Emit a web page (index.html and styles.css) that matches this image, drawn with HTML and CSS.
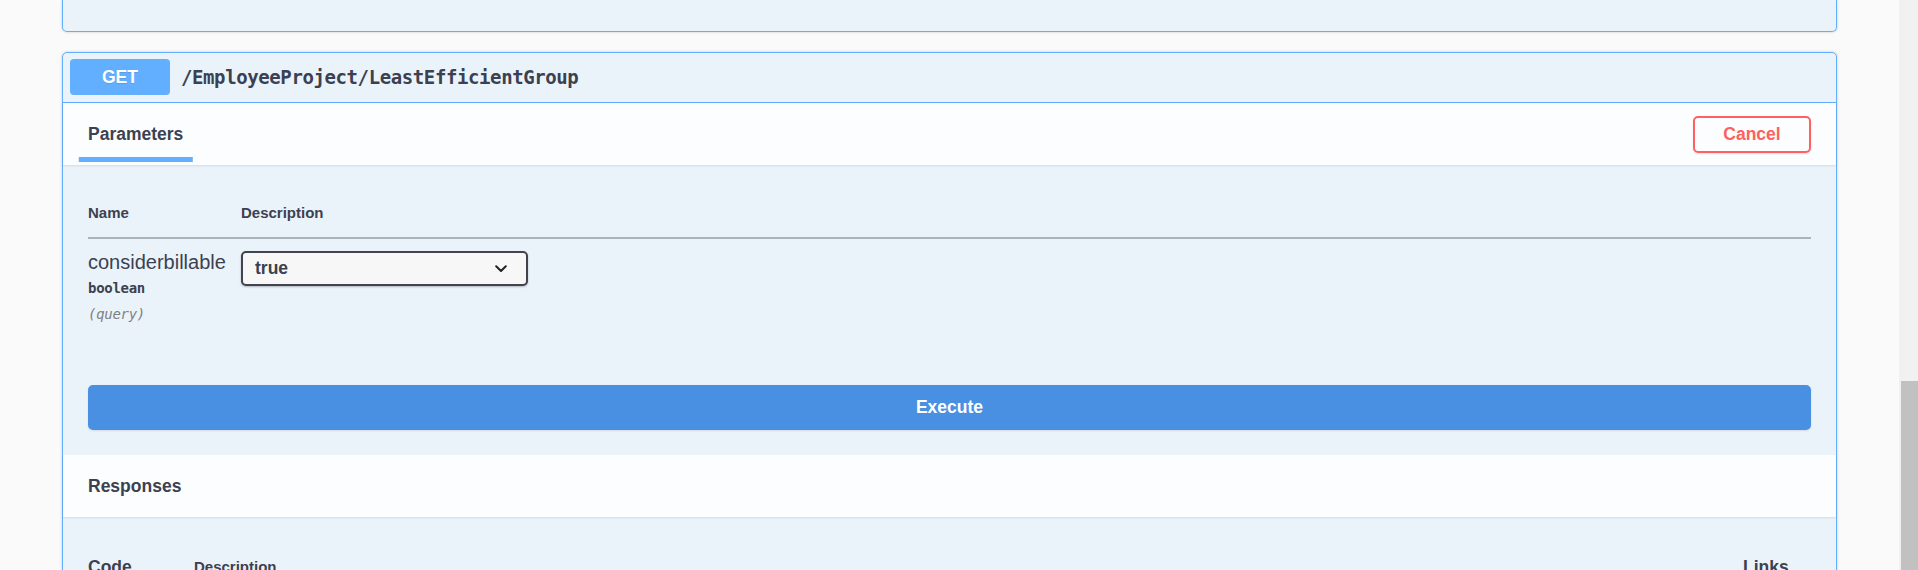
FILE: index.html
```html
<!DOCTYPE html>
<html lang="en">
<head>
<meta charset="utf-8">
<title>Swagger UI</title>
<link rel="stylesheet" href="styles.css">
</head>
<body>
<div class="screen">
  <div class="page">
    <div class="opblock opblock-prev"></div>
    <div class="opblock">
      <div class="summary">
        <span class="method">GET</span>
        <span class="path">/EmployeeProject/LeastEfficientGroup</span>
      </div>
      <div class="section-header">
        <div class="tab"><h4 class="tab-title">Parameters</h4></div>
        <button class="btn-cancel">Cancel</button>
      </div>
      <div class="table-container">
        <table class="params">
          <thead>
            <tr>
              <th class="col-name">Name</th>
              <th class="col-desc">Description</th>
            </tr>
          </thead>
          <tbody>
            <tr>
              <td class="col-name">
                <div class="param-name">considerbillable</div>
                <div class="param-type">boolean</div>
                <div class="param-in">(query)</div>
              </td>
              <td class="col-desc">
                <div class="select">
                  <span class="select-value">true</span>
                  <svg class="chevron" width="12" height="8" viewBox="0 0 12 8"><path d="M1.2 1.3 L6 6 L10.8 1.3" fill="none" stroke="#222" stroke-width="2" stroke-linecap="round" stroke-linejoin="round"/></svg>
                </div>
              </td>
            </tr>
          </tbody>
        </table>
      </div>
      <div class="execute-wrapper">
        <button class="btn-execute">Execute</button>
      </div>
      <div class="section-header">
        <h4 class="section-title">Responses</h4>
      </div>
      <div class="responses-inner">
        <table class="responses">
          <thead>
            <tr>
              <th class="r-code">Code</th>
              <th class="r-desc">Description</th>
              <th class="r-links">Links</th>
            </tr>
          </thead>
        </table>
      </div>
    </div>
  </div>
  <div class="scrollbar"><div class="thumb"></div></div>
</div>
</body>
</html>
```
FILE: styles.css
```css
html, body {
  margin: 0;
  padding: 0;
  height: 570px;
  overflow: hidden;
}
body {
  font-family: "Liberation Sans", Arial, sans-serif;
  color: #3b4151;
}
.screen {
  display: flex;
  height: 570px;
}
.page {
  flex: 1;
  background: #fafafa;
  padding: 0 62px 0 62px;
  overflow: hidden;
}
.scrollbar {
  width: 19px;
  background: #f1f1f1;
  display: flex;
  flex-direction: column;
  align-items: flex-end;
}
.thumb {
  width: 17px;
  margin-top: 381px;
  flex: 1;
  background: #c1c1c1;
}
.opblock {
  background: #ebf3fa;
  border: 1px solid #61affe;
  border-radius: 5px;
  box-shadow: 0 0 3px rgba(0, 0, 0, 0.19);
}
.opblock-prev {
  height: 31px;
  border-top: none;
  border-radius: 0 0 5px 5px;
  margin-bottom: 20px;
}
.summary {
  display: flex;
  align-items: center;
  padding: 6px 6px 7px 7px;
  border-bottom: 1px solid #61affe;
}
.method {
  width: 100px;
  height: 36px;
  display: flex;
  align-items: center;
  justify-content: center;
  background: #61affe;
  border-radius: 4px;
  color: #fff;
  font-weight: 700;
  font-size: 17.5px;
  text-shadow: 0 1px 0 rgba(0, 0, 0, 0.1);
}
.path {
  padding-left: 11px;
  font-family: "DejaVu Sans Mono", monospace;
  font-weight: 700;
  font-size: 19px;
  letter-spacing: -0.4px;
  color: #3b4151;
}
.section-header {
  display: flex;
  align-items: center;
  justify-content: space-between;
  height: 62px;
  padding: 0 25px;
  background: rgba(255, 255, 255, 0.8);
  box-shadow: 0 1px 2px rgba(0, 0, 0, 0.1);
}
.tab {
  align-self: stretch;
  display: flex;
  align-items: center;
  position: relative;
}
.tab-title, .section-title {
  margin: 0;
  font-size: 17.5px;
  font-weight: 700;
  line-height: 20px;
  color: #3b4151;
}
.tab-title {
  position: relative;
}
.tab::after {
  content: "";
  position: absolute;
  bottom: 3px;
  left: 50%;
  width: 120%;
  height: 5px;
  transform: translateX(-50%);
  background: #61affe;
}
.btn-cancel {
  width: 118px;
  height: 37px;
  padding: 0;
  background: transparent;
  border: 2px solid #ff6060;
  border-radius: 5px;
  color: #ff6060;
  font-family: "Liberation Sans", Arial, sans-serif;
  font-size: 17.5px;
  font-weight: 700;
  box-shadow: 0 1px 2px rgba(0, 0, 0, 0.1);
}
.table-container {
  padding: 25px;
}
.params, .responses {
  width: 100%;
  border-collapse: collapse;
  table-layout: fixed;
}
.params th {
  text-align: left;
  font-size: 15px;
  font-weight: 700;
  line-height: 18px;
  padding: 14px 0 15px 0;
  border-bottom: 2px solid #abb2bd;
  color: #3b4151;
}
.params .col-name {
  width: 153px;
}
.params td {
  vertical-align: top;
  padding: 12px 0 12px 0;
}
.param-name {
  font-size: 20px;
  line-height: 23px;
  color: #3b4151;
}
.param-type {
  font-family: "DejaVu Sans Mono", monospace;
  font-size: 14px;
  letter-spacing: -0.3px;
  font-weight: 700;
  line-height: 17px;
  padding: 6px 0;
  color: #3b4151;
}
.param-in {
  font-family: "DejaVu Sans Mono", monospace;
  font-size: 14px;
  letter-spacing: -0.3px;
  font-style: italic;
  line-height: 17px;
  padding-top: 3px;
  color: #808080;
}
.select {
  width: 287px;
  height: 35px;
  box-sizing: border-box;
  display: flex;
  align-items: center;
  justify-content: space-between;
  padding: 0 19px 0 12px;
  background: #f7f7f7;
  border: 2px solid #41444e;
  border-radius: 5px;
  box-shadow: 0 1px 2px 0 rgba(0, 0, 0, 0.25);
}
.select-value {
  font-size: 17.5px;
  font-weight: 700;
  color: #3b4151;
}
.chevron {
  display: block;
}
.execute-wrapper {
  padding: 25px;
}
.btn-execute {
  display: block;
  width: 100%;
  height: 45px;
  background: #4990e2;
  border: 2px solid #4990e2;
  border-radius: 5px;
  color: #fff;
  font-family: "Liberation Sans", Arial, sans-serif;
  font-size: 17.5px;
  font-weight: 700;
  box-shadow: 0 1px 2px rgba(0, 0, 0, 0.1);
}
.responses-inner {
  padding: 25px;
}
.responses th {
  text-align: left;
  font-weight: 700;
  line-height: 20px;
  padding: 15px 0;
  color: #3b4151;
}
.r-code {
  width: 106px;
  font-size: 17.5px;
}
.r-desc {
  font-size: 15px;
}
.r-links {
  width: 68px;
  font-size: 17.5px;
}
```
